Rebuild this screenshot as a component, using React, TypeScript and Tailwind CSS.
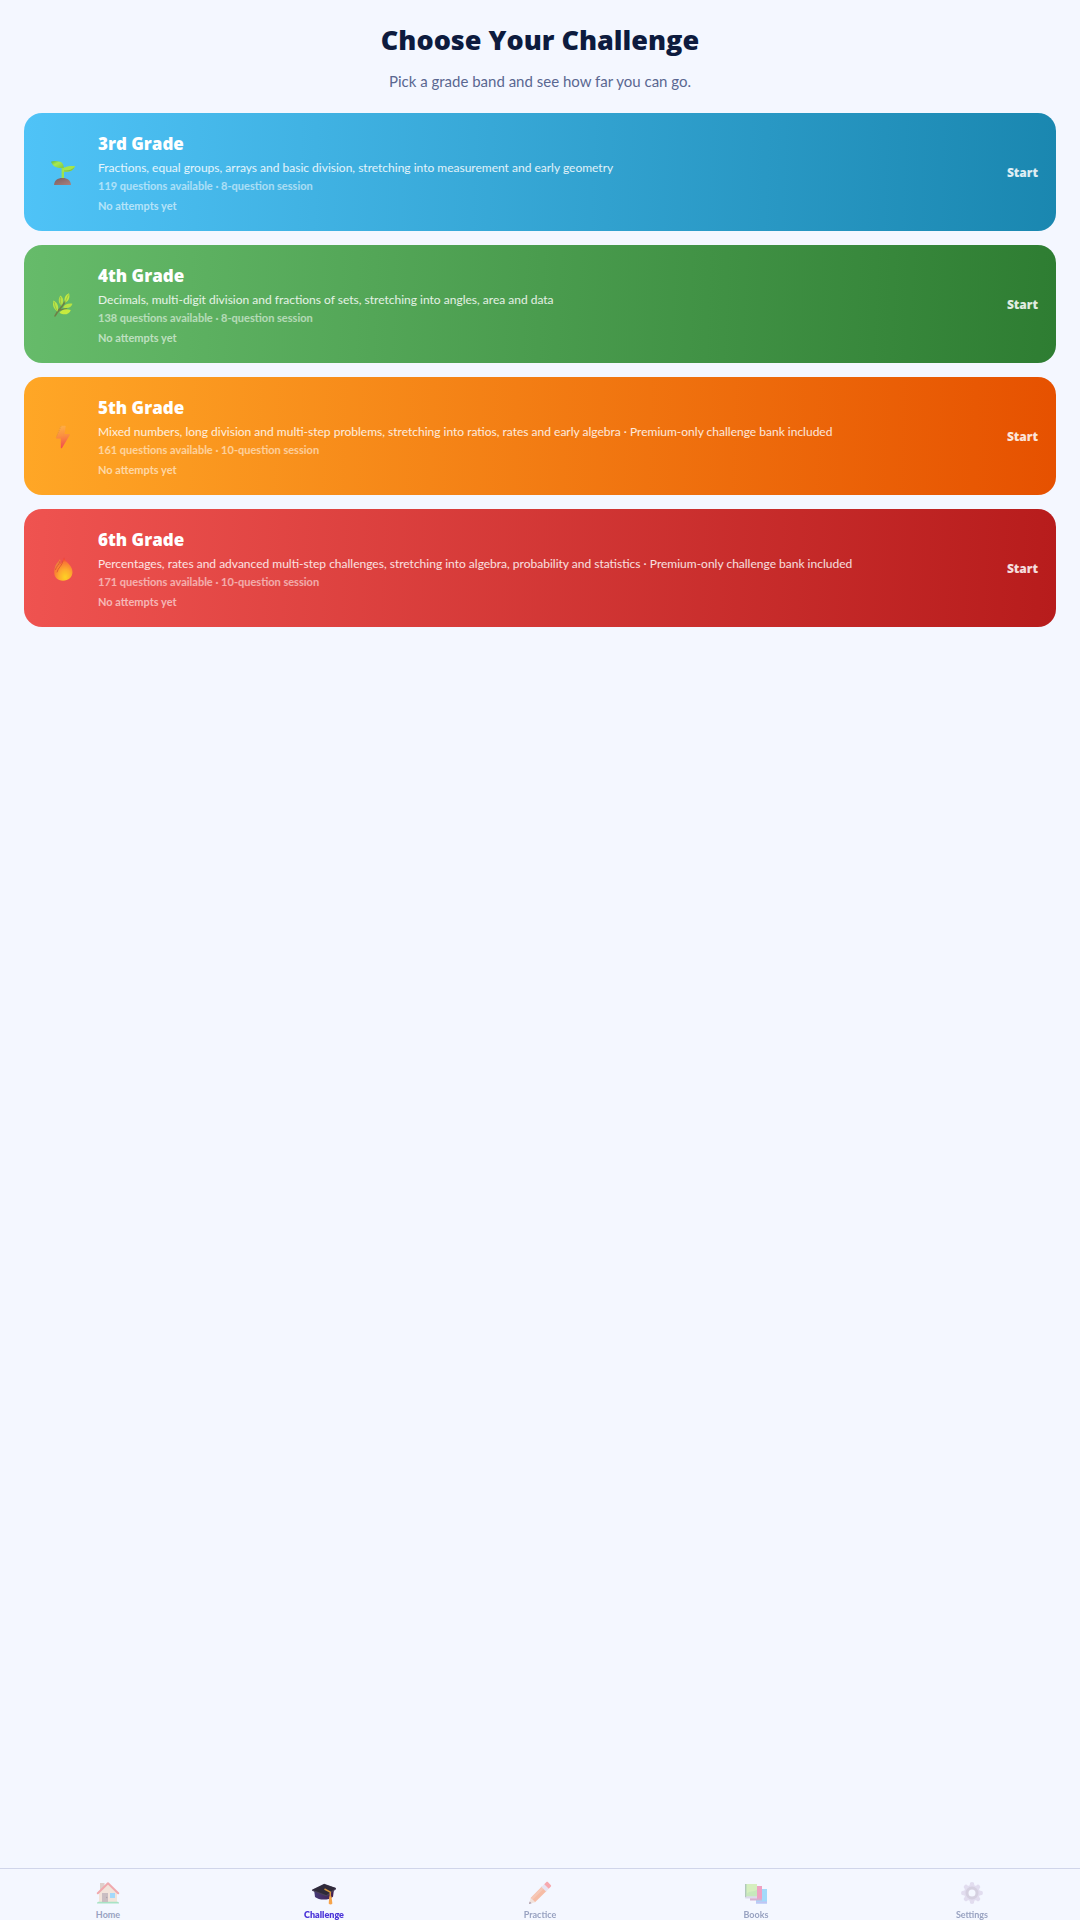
import React from 'react';

type Grade = {
  id: string;
  title: string;
  description: string;
  questions: number;
  session: number;
  gradient: string;
  icon: React.ReactNode;
};

type NavItem = {
  label: string;
  icon: React.ReactNode;
  active?: boolean;
};

const SeedlingIcon = () => (
  <svg viewBox="0 0 24 24" className="size-6" aria-hidden="true">
    <defs>
      <linearGradient id="leaf" x1="0" y1="0" x2="1" y2="1">
        <stop offset="0" stopColor="#62b530" />
        <stop offset="0.4" stopColor="#b2ee3c" />
        <stop offset="1" stopColor="#84c83c" />
      </linearGradient>
      <linearGradient id="soil" x1="0" y1="0" x2="1" y2="1">
        <stop offset="0" stopColor="#7f5450" />
        <stop offset="1" stopColor="#b57a70" />
      </linearGradient>
    </defs>
    <path d="M10.600 6h2.400v12h-2.400z" fill="#a4e838" />
    <path d="M0 .8C2-.2 6-.2 9 .8c2.600.9 3.800 2.800 3.800 6.200C6 7.400 2 6 0 .8z" fill="url(#leaf)" />
    <path d="M11.500 10.500C11.500 6 15 4.800 24 5c-1.500 5-6 6.500-12.500 5.500z" fill="#b0ea36" />
    <path d="M13 9.500c4 .5 8-.8 10.500-3.500-1.500 4-6 5.200-10.500 4.300z" fill="#7dc23c" />
    <path d="M3 24c.3-4.500 3.500-7 8.500-7s8.200 2.500 8.500 7z" fill="url(#soil)" />
  </svg>
);

const HerbIcon = () => (
  <svg viewBox="0 0 24 24" className="size-6" aria-hidden="true">
    <path d="M4 23C7 17 11 14.500 14.500 8M7.500 18L4.500 13M8.500 17l7-1" fill="none" stroke="#6f7a42" strokeWidth="1.600" strokeLinecap="round" />
    <path d="M2.500 7.500c3.500 1.500 6 6 4 11C2.500 16 1 12 2.500 7.500z" fill="#c4ea44" />
    <path d="M9.500 2.500c3.200 2.500 3.700 6.500 1 10C7.300 10 6.800 6 9.500 2.500z" fill="#c0e644" />
    <path d="M18 .3c1.300 4.200-.4 7.900-4 9.400-1.300-4.200.2-7.900 4-9.400z" fill="#cdf03e" />
    <path d="M12 14.500c1.500-3.200 4.500-4.300 9.500-3.800-1 3.800-5 5.300-9.500 3.800z" fill="#c0e842" />
    <path d="M8.500 19.700c2-3.300 6-4.300 11.300-2.800-1.500 4.500-6.800 5.800-11.300 2.800z" fill="#d2f03a" />
    <path d="M3 9c1 4 1.500 6.500 3.500 9M9.500 4c-.5 4 0 6 1 8.500M17.500 1.500l-3.500 8" fill="none" stroke="#8dbb40" strokeWidth=".7" />
  </svg>
);

const BoltIcon = () => (
  <svg viewBox="0 0 24 24" className="size-6" aria-hidden="true">
    <defs>
      <linearGradient id="bolt" x1="0.400" y1="0" x2="0.500" y2="1">
        <stop offset="0" stopColor="#ffb04a" />
        <stop offset="0.450" stopColor="#fb8c44" />
        <stop offset="1" stopColor="#f23f54" />
      </linearGradient>
    </defs>
    <path d="M10.500.8h3.700c.4 0 .6.3.5.7L13.500 9h4.800c.6 0 .8.5.5 1L11 23c-.4.6-1.200.4-1.200-.3V13.500H5.700c-.6 0-.8-.4-.6-.9L9.700 1.300c.1-.3.4-.5.800-.5z" fill="url(#bolt)" />
    <path d="M10 1.300L5.200 12.400" stroke="#d68f34" strokeWidth=".7" strokeDasharray="1 1" />
  </svg>
);

const FireIcon = () => (
  <svg viewBox="0 0 24 24" className="size-6" aria-hidden="true">
    <defs>
      <radialGradient id="flame" cx="0.600" cy="0.850" r="0.850">
        <stop offset="0" stopColor="#ffe01f" />
        <stop offset="0.400" stopColor="#ffb52b" />
        <stop offset="0.750" stopColor="#fb7d33" />
        <stop offset="1" stopColor="#f0282c" />
      </radialGradient>
    </defs>
    <path d="M4.500 8.500C5.500 5.500 8 5 9 2c1.500 4-1 6-1.500 9l-3.500 5c-1-2.500-.5-5 .5-7.500z" fill="#f08a3c" />
    <path d="M13 .3c.5 4.700 8.500 7.200 8.500 14.700 0 5-3.800 8.700-9.500 8.700S3.200 20 3.200 15.500C3.200 9.500 12.500 8 13 .3z" fill="url(#flame)" />
    <path d="M8.800 4.500C8.300 8 5.200 9 4.500 12.500M12 4C11.500 8.500 7 10.500 6 15" fill="none" stroke="#d8502f" strokeWidth=".8" strokeLinecap="round" />
  </svg>
);

const HomeIcon = () => (
  <svg viewBox="0 0 24 24" className="size-6" aria-hidden="true">
    <path d="M4 2h4.500v9H4z" fill="#c9aa9b" />
    <path d="M3 10.500l9-8.500 9 8.500V22H3z" fill="#f1d3b8" />
    <path d="M1 22.500c0-1 .5-1.700 1.500-1.700h19c1 0 1.500.7 1.500 1.700z" fill="#5fd18d" />
    <path d="M6 12h6v9H6z" fill="#a18686" />
    <circle cx="10.700" cy="16.500" r=".7" fill="#665155" />
    <path d="M14 12h5v5h-5z" fill="#57bdf8" />
    <path d="M1.800 12.300L12 2.300l10.200 10" fill="none" stroke="#ee5e60" strokeWidth="2" strokeLinecap="round" strokeLinejoin="round" />
  </svg>
);

const CapIcon = () => (
  <svg viewBox="0 0 24 24" className="size-6" aria-hidden="true">
    <defs>
      <linearGradient id="cap" x1="0" y1="0" x2="1" y2="0">
        <stop offset="0" stopColor="#463b78" />
        <stop offset="1" stopColor="#432052" />
      </linearGradient>
    </defs>
    <path d="M2 8.500l1 7.500c3.500 3 13 4 18-.3l1-7.200z" fill="url(#cap)" />
    <path d="M0 8.800L12.200 2.800 24 7v1.200L14.500 15.500 0 9.800z" fill="#4a4158" />
    <path d="M.5 8.800l11.700-5.600L23.500 7l-9 7.300z" fill="#2f2a3a" />
    <path d="M12.500 8l5.800 3.200v6.500" fill="none" stroke="#d9973e" strokeWidth="1.500" />
    <path d="M17.300 15.500h2.200l.9 7c-.8 1.200-2.900 1.200-3.700 0z" fill="#f6a44c" />
  </svg>
);

const PencilIcon = () => (
  <svg viewBox="0 0 24 24" className="size-6" aria-hidden="true">
    <path d="M14 5.500L18.500 10 7 21.300 2.700 17z" fill="#f8834f" />
    <path d="M14 5.500l2 2L4.500 18.800 2.700 17z" fill="#f79a70" />
    <path d="M2.700 17L7 21.300 1 23z" fill="#ecccba" />
    <path d="M1.700 20.500l1.800 1.800L1 23z" fill="#5c3a51" />
    <path d="M13.500 6L16.200 3.300 20.700 7.800 18 10.500z" fill="#d9d1e5" />
    <path d="M16.200 3.300l2-2c.6-.6 1.300-.6 1.900 0L22.700 4c.6.600.6 1.200 0 1.800l-2 2z" fill="#fa5c60" />
  </svg>
);

const BooksIcon = () => (
  <svg viewBox="0 0 24 24" className="size-6" aria-hidden="true">
    <path d="M12 8h11v14.500H12z" fill="#50bdf5" />
    <path d="M12 20.500h11v2H12z" fill="#8f91e8" />
    <path d="M6 5h12v14H6z" fill="#ea4d87" />
    <path d="M6 17.500h12v2H6z" fill="#b56aa4" />
    <path d="M1 3h12v13.500H1z" fill="#9ad97b" />
    <path d="M3 3h10v5.500C9 11.500 6 9.500 3 12.500z" fill="#b6e780" />
    <path d="M1 15.300h12v2.200H2c-.6 0-1-.5-1-1z" fill="#c4bbda" />
    <path d="M1 3h1.200v13H1z" fill="#6e9a79" />
  </svg>
);

const GearIcon = () => (
  <svg viewBox="0 0 24 24" className="size-6" aria-hidden="true">
    <g stroke="#cfc3e0" strokeWidth="4.500" strokeLinecap="round">
      <path d="M12 3.300v17.400M3.300 12h17.400M6 6l12 12M18 6L6 18" />
    </g>
    <circle cx="12" cy="12" r="8" fill="#cfc3e0" />
    <circle cx="12" cy="12" r="5" fill="#f4f7ff" stroke="#b5a9c2" strokeWidth="3" />
  </svg>
);

const GRADES: Grade[] = [
  {
    id: 'grade-3',
    title: '3rd Grade',
    description: 'Fractions, equal groups, arrays and basic division, stretching into measurement and early geometry',
    questions: 119,
    session: 8,
    gradient: 'from-[#4fc3f7] to-[#1a87b0]',
    icon: <SeedlingIcon />,
  },
  {
    id: 'grade-4',
    title: '4th Grade',
    description: 'Decimals, multi-digit division and fractions of sets, stretching into angles, area and data',
    questions: 138,
    session: 8,
    gradient: 'from-[#66bb6a] to-[#2e7d32]',
    icon: <HerbIcon />,
  },
  {
    id: 'grade-5',
    title: '5th Grade',
    description:
      'Mixed numbers, long division and multi-step problems, stretching into ratios, rates and early algebra · Premium-only challenge bank included',
    questions: 161,
    session: 10,
    gradient: 'from-[#ffa726] to-[#e65100]',
    icon: <BoltIcon />,
  },
  {
    id: 'grade-6',
    title: '6th Grade',
    description:
      'Percentages, rates and advanced multi-step challenges, stretching into algebra, probability and statistics · Premium-only challenge bank included',
    questions: 171,
    session: 10,
    gradient: 'from-[#ef5350] to-[#b71c1c]',
    icon: <FireIcon />,
  },
];

const NAV_ITEMS: NavItem[] = [
  { label: 'Home', icon: <HomeIcon /> },
  { label: 'Challenge', icon: <CapIcon />, active: true },
  { label: 'Practice', icon: <PencilIcon /> },
  { label: 'Books', icon: <BooksIcon /> },
  { label: 'Settings', icon: <GearIcon /> },
];

const GradeCard: React.FC<{ grade: Grade }> = ({ grade }) => (
  <button
    type="button"
    className={`flex w-full cursor-pointer items-center gap-3.5 rounded-[18px] bg-linear-[92deg] px-[18px] pt-[19px] pb-[17px] text-left text-white ${grade.gradient}`}
  >
    <span className="flex w-[42px] shrink-0 justify-center opacity-90">{grade.icon}</span>
    <span className="flex min-w-0 flex-1 flex-col">
      <span className="font-['Open_Sans',sans-serif] text-[17px] leading-6 font-extrabold">{grade.title}</span>
      <span className="mt-[3px] text-[12px] leading-[18px] text-white/85">{grade.description}</span>
      <span className="mt-px text-[11px] leading-4 font-bold text-white/55">
        {grade.questions} questions available · {grade.session}-question session
      </span>
      <span className="mt-1 text-[11px] leading-4 font-bold text-white/60">No attempts yet</span>
    </span>
    <span className="font-['Open_Sans',sans-serif] text-[12px] leading-5 font-extrabold text-white/85">Start</span>
  </button>
);

const App: React.FC = () => {
  return (
    <div className="flex min-h-screen flex-col bg-[#f4f7ff] font-['Lato','Open_Sans',sans-serif]">
      <main className="flex-1 px-6 pt-5">
        <h1 className="text-center font-['Open_Sans',sans-serif] text-[27px] leading-10 font-extrabold text-[#0d1b3e]">
          Choose Your Challenge
        </h1>
        <p className="mt-[9px] text-center text-[15px] leading-6 text-[#5a6791]">
          Pick a grade band and see how far you can go.
        </p>

        <div className="mt-5 flex flex-col gap-3.5">
          {GRADES.map((grade) => (
            <GradeCard key={grade.id} grade={grade} />
          ))}
        </div>
      </main>

      <nav className="sticky bottom-0 grid h-[52px] grid-cols-5 border-t border-[#d0d5ea] bg-[#f4f7ff]">
        {NAV_ITEMS.map((item) => (
          <a
            key={item.label}
            href="#"
            aria-current={item.active ? 'page' : undefined}
            className={`flex flex-col items-center gap-1 pt-3 text-[9px] leading-3 ${
              item.active ? 'font-extrabold text-[#4b35d9]' : 'font-bold text-[#98a2c1]'
            }`}
          >
            <span className={item.active ? '' : 'opacity-50'}>{item.icon}</span>
            {item.label}
          </a>
        ))}
      </nav>
    </div>
  );
};

export default App;
